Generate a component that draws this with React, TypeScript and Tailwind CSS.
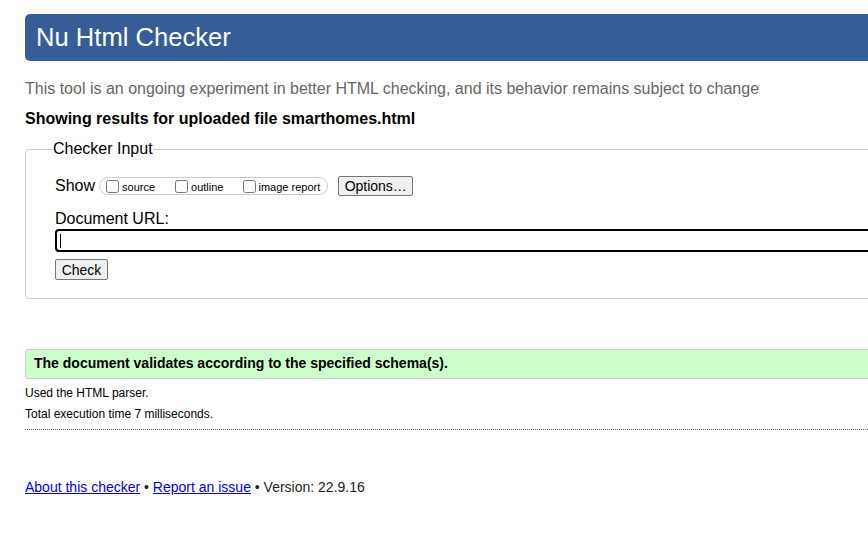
import React from 'react';

const font = { fontFamily: '"Liberation Sans", Arial, sans-serif' };

export default function App() {
  return (
    <div className="w-full h-[540px] overflow-hidden bg-white text-black" style={font}>
      <div className="w-[1000px] pl-[25px]">
        {/* Header */}
        <header className="mt-[14px] h-[47px] flex items-center pl-[11px] bg-[#365d95] rounded-[5px]">
          <h1 className="text-[25.6px] leading-none text-white font-normal">Nu Html Checker</h1>
        </header>

        <p className="mt-[19px] text-[16px] leading-[18px] text-[#666]">
          This tool is an ongoing experiment in better HTML checking, and its behavior remains subject to change
        </p>
        <p className="mt-[12px] text-[16px] leading-[18px] font-bold">
          Showing results for uploaded file smarthomes.html
        </p>

        {/* Checker input */}
        <fieldset className="mt-[12px] border border-[#ccc] rounded-[4px] pl-[29px] pb-[16px]">
          <legend className="-ml-[2px] px-0 text-[16px] leading-[18px]">Checker Input</legend>

          <div className="mt-[17px] flex items-center h-[22px]">
            <span className="text-[16px] leading-[18px] mr-[4px]">Show</span>
            <div className="flex items-center h-[18px] border border-[#ccc] rounded-full pl-[6px] pr-[7px]">
              <label className="flex items-center">
                <input type="checkbox" className="w-[13px] h-[13px] m-0" />
                <span className="ml-[3px] text-[11px] leading-[13px] mt-[2px]">source</span>
              </label>
              <label className="flex items-center ml-[20px]">
                <input type="checkbox" className="w-[13px] h-[13px] m-0" />
                <span className="ml-[3px] text-[11px] leading-[13px] mt-[2px]">outline</span>
              </label>
              <label className="flex items-center ml-[20px]">
                <input type="checkbox" className="w-[13px] h-[13px] m-0" />
                <span className="ml-[2px] text-[11px] leading-[13px] mt-[2px]">image report</span>
              </label>
            </div>
            <button className="ml-[10px] h-[20px] w-[75px] text-[14px] leading-none bg-[#efefef] border border-[#767676] rounded-[2px]">
              Options…
            </button>
          </div>

          <div className="mt-[13px] text-[16px] leading-[18px]">Document URL:</div>
          <div className="mt-[1px] h-[23px] border-2 border-black rounded-[4px] flex items-center pl-[3px]">
            <span className="w-px h-[14px] bg-black" />
          </div>
          <button className="mt-[7px] h-[21px] w-[53px] text-[14px] leading-none bg-[#efefef] border border-[#767676] rounded-[2px]">
            Check
          </button>
        </fieldset>

        {/* Result */}
        <div className="mt-[50px] h-[30px] flex items-center pl-[8px] bg-[#ccffcc] border border-[#ccc] rounded-[3px]">
          <p className="text-[14px] font-bold">The document validates according to the specified schema(s).</p>
        </div>
        <p className="mt-[7px] text-[12px] leading-[14px]">Used the HTML parser.</p>
        <p className="mt-[7px] text-[12px] leading-[14px]">Total execution time 7 milliseconds.</p>
        <div className="mt-[8px] border-t border-dotted border-[#666]" />

        {/* Footer */}
        <p className="mt-[49px] text-[14px] leading-[16px] text-[#222]">
          <a href="#" className="text-[#0000ee] underline">About this checker</a>
          {' • '}
          <a href="#" className="text-[#0000ee] underline">Report an issue</a>
          {' • Version: 22.9.16'}
        </p>
      </div>
    </div>
  );
}
